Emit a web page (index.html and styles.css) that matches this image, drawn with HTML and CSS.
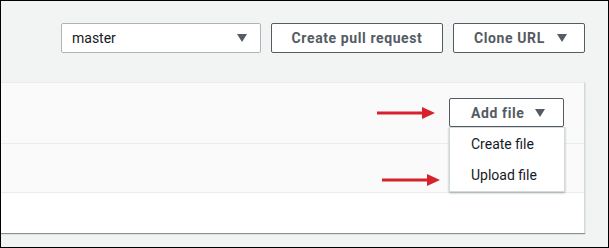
FILE: index.html
```html
<!DOCTYPE html>
<html lang="en">
<head>
    <meta charset="UTF-8">
    <title>Repository</title>
    <link rel="stylesheet" href="styles.css">
</head>
<body>
    <div class="frame">
        <!-- Thanh công cụ phía trên -->
        <div class="toolbar">
            <div class="select">
                <span>master</span>
                <svg class="caret" width="10" height="8" viewBox="0 0 10 8"><path d="M0 0 H10 L5 8 Z"/></svg>
            </div>
            <button class="btn btn-wide">Create pull request</button>
            <button class="btn btn-clone">Clone URL
                <svg class="caret" width="10" height="8" viewBox="0 0 10 8"><path d="M0 0 H10 L5 8 Z"/></svg>
            </button>
        </div>

        <!-- Khung nội dung -->
        <div class="panel">
            <div class="panel-head">
                <div class="add-wrap">
                    <button class="btn btn-add">Add file
                        <svg class="caret" width="10" height="8" viewBox="0 0 10 8"><path d="M0 0 H10 L5 8 Z"/></svg>
                    </button>
                    <ul class="menu">
                        <li>Create file</li>
                        <li>Upload file</li>
                    </ul>
                </div>
            </div>
            <div class="panel-row"></div>
            <div class="panel-body"></div>

            <!-- Mũi tên chú thích -->
            <svg class="arrow arrow-1" width="60" height="14" viewBox="0 0 60 14"><path d="M0 5.5 H45 V1 L58 7 L45 13 V8.5 H0 Z"/></svg>
            <svg class="arrow arrow-2" width="60" height="14" viewBox="0 0 60 14"><path d="M0 5.5 H45 V1 L58 7 L45 13 V8.5 H0 Z"/></svg>
        </div>
    </div>
</body>
</html>
```

FILE: styles.css
```css
* {
    box-sizing: border-box;
}

body {
    margin: 0;
    font-family: Roboto, "Liberation Sans", sans-serif;
    font-size: 14px;
}

/* Khung ngoài có viền đen */
.frame {
    width: 609px;
    height: 248px;
    border: 1px solid #000;
    background: #f2f3f3;
    overflow: hidden;
}

.toolbar {
    display: flex;
    justify-content: flex-end;
    gap: 10px;
    margin-top: 22px;
    padding-right: 23px;
}

.select {
    width: 200px;
    height: 30px;
    display: flex;
    align-items: center;
    justify-content: space-between;
    padding: 0 13px 0 10px;
    background: #fff;
    border: 1px solid #aab7b8;
    border-radius: 2px;
    color: #16191f;
}

.caret {
    fill: #545b64;
    display: block;
    flex: none;
}

.btn {
    height: 30px;
    display: flex;
    align-items: center;
    justify-content: flex-start;
    gap: 12px;
    background: #fff;
    border: 1px solid #545b64;
    border-radius: 2px;
    color: #545b64;
    font-family: inherit;
    font-size: 14px;
    font-weight: bold;
    letter-spacing: 0.6px;
    white-space: nowrap;
    padding: 0 0 0 20px;
}

.btn-wide {
    width: 172px;
    justify-content: center;
    padding: 0;
}

.btn-clone {
    width: 132px;
}

/* Khung nội dung chính */
.panel {
    position: relative;
    margin-top: 29px;
    width: 584px;
    border-top: 1px solid #eaeded;
    border-right: 1px solid #d5dbdb;
    box-shadow: 0 1px 1px 0 rgba(0, 28, 36, 0.45);
}

.panel-head {
    height: 61px;
    background: #fafafa;
    border-bottom: 1px solid #eaeded;
    display: flex;
    justify-content: flex-end;
    align-items: flex-start;
    padding: 15px 20px 0 0;
}

.add-wrap {
    position: relative;
}

.btn-add {
    width: 115px;
    height: 29px;
    padding-left: 21px;
    gap: 11px;
}

.menu {
    position: absolute;
    top: 29px;
    left: 0;
    width: 116px;
    margin: 0;
    padding: 3px 0 0;
    height: 65px;
    list-style: none;
    background: #fff;
    border: 1px solid #d5dbdb;
    box-shadow: 0 1px 2px rgba(0, 28, 36, 0.35);
    z-index: 2;
}

.menu li {
    height: 31px;
    line-height: 26px;
    padding-left: 21px;
    color: #16191f;
}

.panel-row {
    height: 49px;
    background: #fafafa;
    border-bottom: 1px solid #eaeded;
}

.panel-body {
    height: 40px;
    background: #fff;
}

.arrow {
    position: absolute;
    fill: #d6232b;
}

.arrow-1 {
    left: 376px;
    top: 23px;
}

.arrow-2 {
    left: 381px;
    top: 90px;
}
```
